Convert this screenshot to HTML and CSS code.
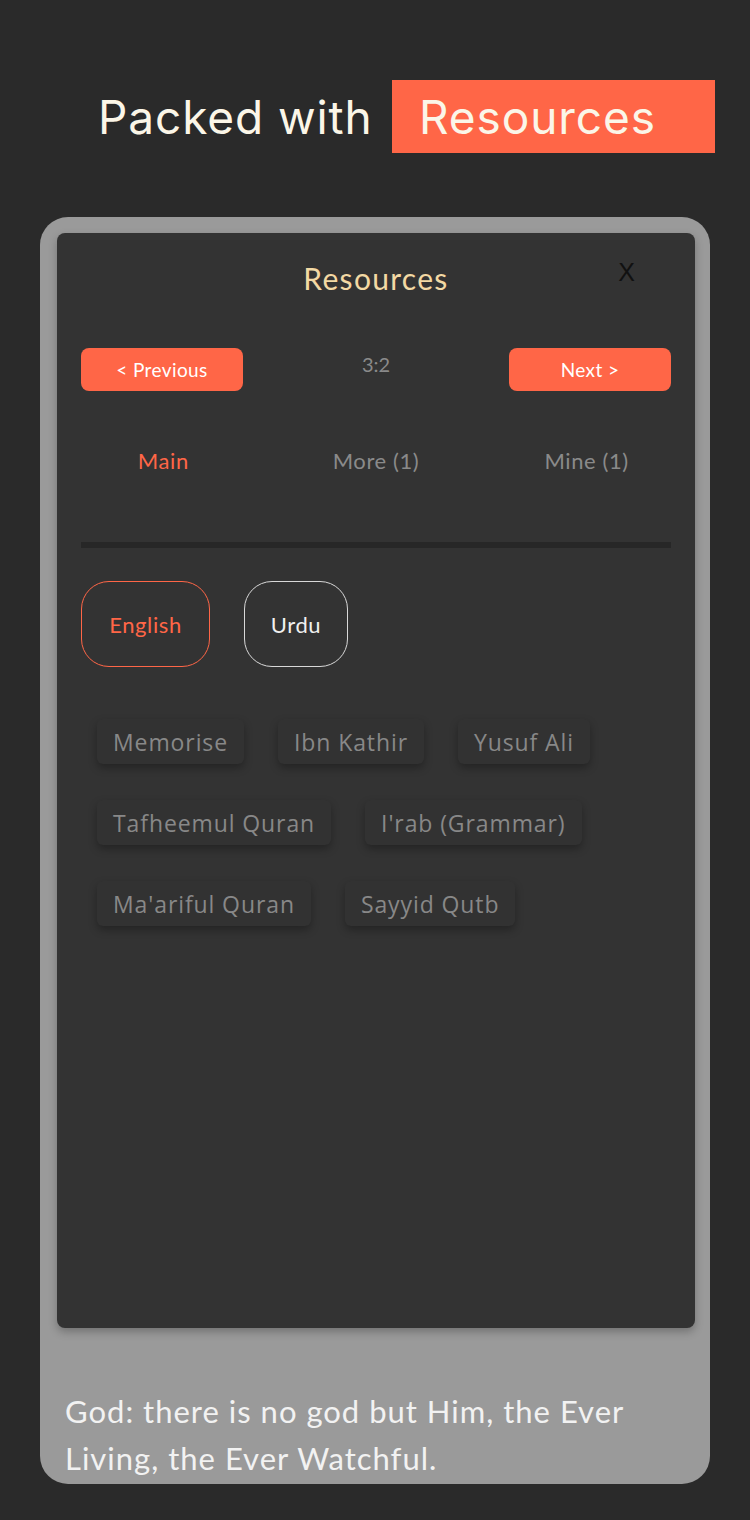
FILE: index.html
```html
<!DOCTYPE html>
<html>
<head>
<meta charset="utf-8">
<link rel="stylesheet" href="styles.css">
</head>
<body>
<div class="page">
  <header class="hero">
    <span class="hero-text">Packed with</span>
    <span class="hero-badge">Resources</span>
  </header>
  <div class="frame">
    <div class="panel">
      <div class="panel-head">
        <h1 class="panel-title">Resources</h1>
        <span class="close">X</span>
      </div>
      <div class="nav-row">
        <button class="nav-btn">&lt; Previous</button>
        <span class="verse">3:2</span>
        <button class="nav-btn">Next &gt;</button>
      </div>
      <div class="tabs">
        <span class="tab active">Main</span>
        <span class="tab">More (1)</span>
        <span class="tab">Mine (1)</span>
      </div>
      <div class="divider"></div>
      <div class="langs">
        <button class="lang active">English</button>
        <button class="lang">Urdu</button>
      </div>
      <div class="chips">
        <span class="chip">Memorise</span>
        <span class="chip">Ibn Kathir</span>
        <span class="chip">Yusuf Ali</span>
        <span class="chip">Tafheemul Quran</span>
        <span class="chip">I'rab (Grammar)</span>
        <span class="chip">Ma'ariful Quran</span>
        <span class="chip">Sayyid Qutb</span>
      </div>
    </div>
    <p class="ayah">God: there is no god but Him, the Ever Living, the Ever Watchful.</p>
  </div>
</div>
</body>
</html>
```

FILE: styles.css
```css
* { box-sizing: border-box; }
html, body {
  margin: 0;
  padding: 0;
  background: #2a2a2a;
}
.page {
  width: 750px;
  height: 1520px;
  overflow: hidden;
  padding-top: 80px;
}
.hero {
  display: flex;
  align-items: center;
  height: 73px;
  padding-left: 98px;
}
.hero-text {
  font-family: Inter, "Liberation Sans", sans-serif;
  font-size: 46px;
  letter-spacing: 0.9px;
  color: #fbf6e8;
  width: 294px;
}
.hero-badge {
  display: flex;
  align-items: center;
  height: 73px;
  width: 323px;
  padding-left: 27px;
  background: #ff6647;
  font-family: Inter, "Liberation Sans", sans-serif;
  font-size: 46px;
  letter-spacing: 0.9px;
  color: #fbf6e8;
}
.frame {
  margin: 64px 0 0 40px;
  width: 670px;
  height: 1267px;
  background: #9a9a9a;
  border-radius: 28px;
  padding: 16px 15px 0 17px;
}
.panel {
  height: 1095px;
  background: #333333;
  border-radius: 8px;
  box-shadow: 0 4px 8px rgba(0,0,0,0.25);
  padding: 0 24px;
  font-family: Lato, "Noto Sans", sans-serif;
}
.panel-head {
  position: relative;
  height: 92px;
  padding-top: 26px;
  display: flex;
  justify-content: center;
}
.panel-title {
  margin: 0;
  font-size: 30px;
  line-height: 38px;
  font-weight: 400;
  color: #f3d9a4;
  letter-spacing: 1.3px;
}
.close {
  position: absolute;
  right: 36px;
  top: 25px;
  font-family: "Liberation Sans", sans-serif;
  font-size: 25px;
  color: #111;
}
.nav-row {
  margin-top: 23px;
  display: flex;
  justify-content: space-between;
  align-items: center;
  height: 43px;
}
.nav-btn {
  width: 162px;
  height: 43px;
  border: 0;
  border-radius: 8px;
  background: #ff6647;
  color: #fff;
  font-family: Lato, "Noto Sans", sans-serif;
  font-size: 19px;
  letter-spacing: 0.4px;
  padding: 0;
}
.verse {
  font-size: 20px;
  color: #8a8a8a;
  margin-top: -12px;
}
.tabs {
  margin-top: 54px;
  display: grid;
  grid-template-columns: repeat(3, 1fr);
  font-size: 22px;
  letter-spacing: 0.6px;
  color: #8a8a8a;
  text-align: center;
  height: 30px;
  align-items: center;
}
.tab:first-child { transform: translateX(-16px); }
.tab:last-child { transform: translateX(14px); }
.tab.active { color: #ff6647; }
.divider {
  margin-top: 67px;
  height: 6px;
  background: #272727;
}
.langs {
  margin-top: 33px;
  display: flex;
  gap: 34px;
}
.lang {
  height: 86px;
  border-radius: 28px;
  background: transparent;
  border: 1.5px solid #d8d8d8;
  color: #f0f0f0;
  font-family: Lato, "Noto Sans", sans-serif;
  font-size: 22px;
  letter-spacing: 0.6px;
  padding: 0;
  width: 104px;
}
.lang.active {
  width: 129px;
  border-color: #ff6647;
  color: #ff6647;
}
.chips {
  margin: 52px 0 0 16px;
  display: flex;
  flex-wrap: wrap;
  column-gap: 34px;
  row-gap: 36px;
  width: 540px;
}
.chip {
  height: 45px;
  display: flex;
  align-items: center;
  padding: 0 16px;
  background: #323232;
  border-radius: 6px;
  box-shadow: 0 4px 8px rgba(0,0,0,0.3);
  font-family: "Open Sans", sans-serif;
  font-size: 23px;
  letter-spacing: 0.9px;
  color: #888888;
}
.ayah {
  margin: 60px 0 0 8px;
  font-family: Lato, "Noto Sans", sans-serif;
  font-size: 31px;
  line-height: 47px;
  letter-spacing: 1px;
  color: #f2f2f2;
  width: 600px;
}
```
